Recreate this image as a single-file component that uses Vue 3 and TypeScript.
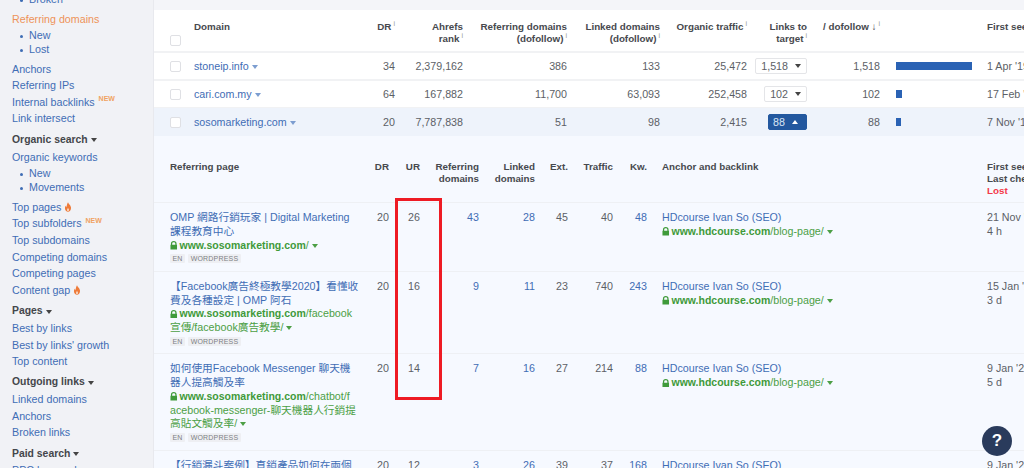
<script setup lang="ts">
interface NavItem { t: string; k: 'link' | 'active' | 'sub' | 'title'; badge?: 'new' | 'fire'; gap?: number }
const nav: NavItem[] = [
  { t: 'Broken', k: 'sub' },
  { t: 'Referring domains', k: 'active', gap: 4 },
  { t: 'New', k: 'sub', gap: 1.3 },
  { t: 'Lost', k: 'sub' },
  { t: 'Anchors', k: 'link', gap: 4.3 },
  { t: 'Referring IPs', k: 'link' },
  { t: 'Internal backlinks', k: 'link', badge: 'new' },
  { t: 'Link intersect', k: 'link' },
  { t: 'Organic search', k: 'title', gap: 4.9 },
  { t: 'Organic keywords', k: 'link' },
  { t: 'New', k: 'sub', gap: 1.6 },
  { t: 'Movements', k: 'sub' },
  { t: 'Top pages', k: 'link', badge: 'fire', gap: 4.3 },
  { t: 'Top subfolders', k: 'link', badge: 'new' },
  { t: 'Top subdomains', k: 'link' },
  { t: 'Competing domains', k: 'link' },
  { t: 'Competing pages', k: 'link' },
  { t: 'Content gap', k: 'link', badge: 'fire' },
  { t: 'Pages', k: 'title', gap: 4.9 },
  { t: 'Best by links', k: 'link' },
  { t: "Best by links' growth", k: 'link' },
  { t: 'Top content', k: 'link' },
  { t: 'Outgoing links', k: 'title', gap: 4.4 },
  { t: 'Linked domains', k: 'link' },
  { t: 'Anchors', k: 'link' },
  { t: 'Broken links', k: 'link' },
  { t: 'Paid search', k: 'title', gap: 4.9 },
  { t: 'PPC keywords', k: 'link' }
]
const domains = [
  { d: 'stoneip.info', dr: 34, rank: '2,379,162', ref: '386', linked: '133', traffic: '25,472', links: '1,518', df: '1,518', bar: 76, first: "1 Apr '19", open: false },
  { d: 'cari.com.my', dr: 64, rank: '167,882', ref: '11,700', linked: '63,093', traffic: '252,458', links: '102', df: '102', bar: 6, first: "17 Feb '19", open: false },
  { d: 'sosomarketing.com', dr: 20, rank: '7,787,838', ref: '51', linked: '98', traffic: '2,415', links: '88', df: '88', bar: 5, first: "7 Nov '19", open: true }
]
const pages = [
  { title: ['OMP 網路行銷玩家 | Digital Marketing', '課程教育中心'], path: ['/'], dr: 20, ur: 26, ref: 43, linked: 28, ext: 45, traffic: 40, kw: 48, first: "21 Nov '19", last: '4 h', tags: true },
  { title: ['【Facebook廣告終極教學2020】看懂收', '費及各種設定 | OMP 阿石'], path: ['/facebook', '宣傳/facebook廣告教學/'], dr: 20, ur: 16, ref: 9, linked: 11, ext: 23, traffic: 740, kw: 243, first: "15 Jan '20", last: '3 d', tags: true },
  { title: ['如何使用Facebook Messenger 聊天機', '器人提高觸及率'], path: ['/chatbot/f', 'acebook-messenger-聊天機器人行銷提', '高貼文觸及率/'], dr: 20, ur: 14, ref: 7, linked: 16, ext: 27, traffic: 214, kw: 88, first: "9 Jan '20", last: '5 d', tags: true },
  { title: ['【行銷漏斗案例】直銷產品如何在兩個'], path: [], dr: 20, ur: 12, ref: 3, linked: 26, ext: 39, traffic: 37, kw: 168, first: "9 Jan '20", last: '', tags: false }
]
</script>

<template>
  <div class="app">
    <aside class="side">
      <div
        v-for="(n, i) in nav"
        :key="i"
        class="nav"
        :class="n.k"
        :style="{ marginTop: (n.gap ?? 0) + 'px' }"
      >
        <span>{{ n.t }}</span>
        <i v-if="n.k === 'title'" class="caret dark"></i>
        <b v-if="n.badge === 'new'" class="new">NEW</b>
        <svg v-if="n.badge === 'fire'" class="fire" viewBox="0 0 10 12" width="8" height="10">
          <path d="M5 0c.4 2 3.800 3.600 3.800 7.300C8.800 10 7 12 5 12S1.200 10 1.200 7.500c0-1.500.7-2.500 1.500-3.300 0 1 .3 1.700.9 2C3.400 4 3.800 1.800 5 0z" fill="#ee7b3a" />
          <path d="M5 7c.2 1 1.300 1.500 1.300 2.800 0 .9-.6 1.500-1.300 1.500s-1.300-.6-1.300-1.500C3.700 8.700 4.800 8 5 7z" fill="#f9d9c2" />
        </svg>
      </div>
    </aside>

    <main class="main">
      <section class="top">
        <div class="grid-top head">
          <span class="check-cell"><span class="check"></span></span>
          <span>Domain</span>
          <span class="r">DR<sup>i</sup></span>
          <span class="r">Ahrefs<br />rank<sup>i</sup></span>
          <span class="r">Referring domains<br />(dofollow)<sup>i</sup></span>
          <span class="r">Linked domains<br />(dofollow)<sup>i</sup></span>
          <span class="r">Organic traffic<sup>i</sup></span>
          <span class="r">Links to<br />target<sup>i</sup></span>
          <span class="r">/ dofollow ↓<sup>i</sup></span>
          <span></span>
          <span class="first">First seen</span>
        </div>
        <div v-for="d in domains" :key="d.d" class="grid-top row" :class="{ open: d.open }">
          <span class="check-cell"><span class="check"></span></span>
          <span class="link">{{ d.d }}<i class="caret blue"></i></span>
          <span class="r">{{ d.dr }}</span>
          <span class="r">{{ d.rank }}</span>
          <span class="r">{{ d.ref }}</span>
          <span class="r">{{ d.linked }}</span>
          <span class="r">{{ d.traffic }}</span>
          <span class="r links-cell">
            <span class="pick" :class="{ on: d.open }">{{ d.links }}<i class="caret" :class="d.open ? 'up' : 'dark'"></i></span>
          </span>
          <span class="r">{{ d.df }}</span>
          <span class="bar-cell"><span class="bar" :style="{ width: d.bar + 'px' }"></span></span>
          <span class="first">{{ d.first }}</span>
        </div>
      </section>

      <section class="bottom">
        <div class="grid-low lowhead">
          <span>Referring page</span>
          <span class="r">DR</span>
          <span class="r">UR</span>
          <span class="r">Referring<br />domains</span>
          <span class="r">Linked<br />domains</span>
          <span class="r">Ext.</span>
          <span class="r">Traffic</span>
          <span class="r">Kw.</span>
          <span class="anchor">Anchor and backlink</span>
          <span class="first">First seen<br />Last check<br /><em>Lost</em></span>
        </div>
        <div v-for="p in pages" :key="p.ur" class="grid-low lowrow">
          <div class="page">
            <div v-for="t in p.title" :key="t" class="link">{{ t }}</div>
            <div v-if="p.path.length" class="url">
              <svg class="lock" viewBox="0 0 8 9" width="7.500" height="8.500"><path d="M1 4V2.700a3 2.700 0 0 1 6 0V4h.5v5H.5V4zm1.300 0h3.400V2.800a1.700 1.500 0 0 0-3.400 0z" fill="#3f9a3a" /></svg>
              <b>www.sosomarketing.com</b><span>{{ p.path[0] }}</span><i v-if="p.path.length === 1" class="caret green"></i>
            </div>
            <div v-for="(u, ui) in p.path.slice(1)" :key="u" class="url">
              {{ u }}<i v-if="ui === p.path.length - 2" class="caret green"></i>
            </div>
            <div v-if="p.tags" class="tags"><span>EN</span><span>WORDPRESS</span></div>
          </div>
          <span class="r">{{ p.dr }}</span>
          <span class="r">{{ p.ur }}</span>
          <span class="r link">{{ p.ref }}</span>
          <span class="r link">{{ p.linked }}</span>
          <span class="r">{{ p.ext }}</span>
          <span class="r">{{ p.traffic }}</span>
          <span class="r link">{{ p.kw }}</span>
          <div class="anchor">
            <div class="link">HDcourse Ivan So (SEO)</div>
            <div class="url">
              <svg class="lock" viewBox="0 0 8 9" width="7.500" height="8.500"><path d="M1 4V2.700a3 2.700 0 0 1 6 0V4h.5v5H.5V4zm1.300 0h3.400V2.800a1.700 1.500 0 0 0-3.400 0z" fill="#3f9a3a" /></svg>
              <b>www.hdcourse.com</b><span>/blog-page/</span><i class="caret green"></i>
            </div>
          </div>
          <div class="first">{{ p.first }}<br />{{ p.last }}</div>
        </div>
      </section>

      <div class="mark"></div>
    </main>

    <button class="help" type="button">?</button>
  </div>
</template>

<style>
html, body { margin: 0; overflow: hidden; background: #f4f5f9; }
</style>

<style scoped>
.app {
  display: flex;
  width: 1024px;
  height: 468px;
  overflow: hidden;
  position: relative;
  font-family: "Liberation Sans", "Noto Sans CJK TC", sans-serif;
  font-size: 10.7px;
  color: #5c5f66;
}
.side {
  flex: 0 0 154px;
  box-sizing: border-box;
  padding: 0 0 0 12px;
  margin-top: -7px;
  height: 490px;
  background: #f1f2f6;
  border-right: 1px solid #e8e9ee;
}
.nav { line-height: 16.64px; height: 16.64px; white-space: nowrap; color: #3f6db5; display: flex; align-items: center; }
.nav.active { color: #ee9259; }
.nav.sub { line-height: 13.8px; height: 13.8px; padding-left: 17px; position: relative; }
.nav.sub::before {
  content: "";
  position: absolute;
  left: 8px;
  top: 6px;
  width: 3px;
  height: 3px;
  border-radius: 50%;
  background: #3f6db5;
}
.nav.title { color: #44464b; font-weight: 700; font-size: 10.4px; }
.new { color: #f0a262; font-size: 7px; font-weight: 700; margin: -5px 0 0 4px; }
.fire { margin-left: 3px; }
.caret {
  display: inline-block;
  width: 0;
  height: 0;
  margin-left: 3px;
  border-left: 3.200px solid transparent;
  border-right: 3.200px solid transparent;
  border-top: 4px solid #444;
  vertical-align: 1px;
}
.caret.blue { border-top-color: #7c9dd0; }
.caret.green { border-top-color: #4c9f45; }
.caret.up { border-top: 0; border-bottom: 4px solid #fff; }
.caret.dark { border-top-color: #444; }
.main { flex: 1 1 auto; min-width: 0; position: relative; padding-top: 10px; }
.top { background: #fff; }
.grid-top {
  display: grid;
  grid-template-columns: 24px 176px 25px 68px 104px 93px 87px 60px 73px 107px 110px;
  padding-left: 16px;
  width: 963px;
}
.head {
  border-bottom: 2px solid #f1f2f4;
  font-weight: 700;
  font-size: 9.8px;
  line-height: 12.2px;
  color: #47494e;
  padding-top: 11px;
  height: 30px;
}
sup { font-size: 7px; font-weight: 400; color: #999; line-height: 0; margin-left: 2px; vertical-align: 4px; }
.check-cell { display: flex; align-items: center; }
.head .check-cell { align-items: flex-end; padding-bottom: 5px; }
.check {
  width: 9px;
  height: 9px;
  display: block;
  background: #fff;
  border: 1px solid #dfe0e4;
  border-radius: 2px;
}
.row { height: 26px; align-items: center; border-bottom: 2px solid #f1f2f4; }
.row.open { background: #eef3fb; height: 28px; margin-top: -1px; border-bottom: 0; position: relative; }
.r { text-align: right; }
.link { color: #3f6db5; }
.first { white-space: nowrap; }
.links-cell { display: flex; justify-content: flex-end; }
.pick {
  display: inline-flex;
  align-items: center;
  height: 14px;
  padding: 0 5px;
  background: #fff;
  border: 1px solid #e4e5e8;
  border-radius: 2px;
  color: #5c5f66;
}
.pick .caret { margin-left: 7px; }
.pick.on { background: #23589f; border-color: #23589f; color: #d8e4f5; padding: 0 8px 0 4px; }
.bar-cell { display: flex; align-items: center; padding-left: 16px; }
.bar { display: block; height: 8px; background: #2a62b4; }
.bottom { background: #f6f9ff; height: 340px; }
.grid-low {
  display: grid;
  grid-template-columns: 188px 31px 31px 59px 56px 33px 45px 34px 340px 110px;
  padding-left: 16px;
  width: 1000px;
}
.lowhead {
  font-weight: 700;
  font-size: 9.8px;
  line-height: 12.2px;
  color: #47494e;
  padding-top: 25px;
  height: 41px;
  border-bottom: 1px solid #eef0f4;
}
.lowhead em { color: #f4394a; font-style: normal; }
.lowrow {
  border-bottom: 1px solid #eef0f4;
  padding-top: 8px;
  padding-bottom: 7.6px;
  line-height: 13.75px;
}
.page { white-space: nowrap; min-width: 0; }
.url { color: #4c9f45; white-space: nowrap; }
.url b { font-weight: 700; color: #3f9a3a; font-size: 10.5px; }
.lock { margin-right: 2px; vertical-align: -1px; }
.tags { display: flex; gap: 3px; margin-top: 2px; height: 9px; }
.tags span {
  font-size: 7px;
  line-height: 9px;
  padding: 0 2.5px;
  background: #eeeff3;
  color: #7d7f84;
  border-radius: 1px;
  letter-spacing: .2px;
}
.anchor { padding-left: 15px; white-space: nowrap; }
.mark {
  position: absolute;
  left: 241px;
  top: 198px;
  width: 41px;
  height: 196px;
  border: 3px solid #ee1b24;
  pointer-events: none;
}
.help {
  position: absolute;
  left: 982px;
  top: 426px;
  width: 30px;
  height: 30px;
  border: 0;
  padding: 0;
  border-radius: 50%;
  background: #2a3b5c;
  color: #fff;
  font-family: inherit;
  font-weight: 700;
  font-size: 17px;
}
</style>
